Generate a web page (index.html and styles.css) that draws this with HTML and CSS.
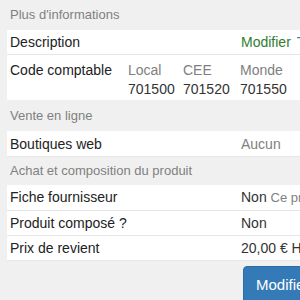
FILE: index.html
```html
<!DOCTYPE html>
<html>
<head>
	<title>Fiche produit</title>
	<meta charset="utf-8">
	<link rel="stylesheet" href="styles.css">
</head>
<body>
	<div class="page">
		<div class="head">Plus d'informations</div>
		<div class="row">
			<div class="label">Description</div>
			<div class="value"><a class="edit">Modifier</a> <a class="link">Traduire</a></div>
		</div>
		<div class="row row-codes">
			<div class="label">Code comptable</div>
			<div class="codes">
				<span class="muted">Local</span><span class="muted">CEE</span><span class="muted">Monde</span>
				<span>701500</span><span>701520</span><span>701550</span>
			</div>
		</div>

		<div class="head head-mid">Vente en ligne</div>
		<div class="row row-tall">
			<div class="label">Boutiques web</div>
			<div class="value muted">Aucun</div>
		</div>

		<div class="head head-low">Achat et composition du produit</div>
		<div class="row">
			<div class="label">Fiche fournisseur</div>
			<div class="value">Non <small class="muted">Ce produit n'a pas de fiche fournisseur</small></div>
		</div>
		<div class="row">
			<div class="label">Produit composé ?</div>
			<div class="value">Non</div>
		</div>
		<div class="row">
			<div class="label">Prix de revient</div>
			<div class="value">20,00 € HT</div>
		</div>

		<div class="footer">
			<button class="btn">Modifier</button>
		</div>
	</div>
</body>
</html>
```

FILE: styles.css
```css
html, body{
	margin: 0;
	padding: 0;
	overflow: hidden;
	background: #f0f0f0;
}
body{
	font-family: "Liberation Sans", Arial, sans-serif;
	font-size: 14px;
	color: #333;
}
.page{
	width: 460px;
}
.head{
	padding: 6px 0 6px 10px;
	line-height: 18px;
	font-size: 13px;
	color: #808080;
}
.head-mid{
	padding-top: 7px;
}
.head-low{
	padding-top: 5px;
	padding-bottom: 5px;
}
.row{
	margin-left: 7px;
	display: grid;
	grid-template-columns: 234px 1fr;
	background: #fff;
	border-bottom: 1px solid #e6e6e6;
	padding: 4px 0;
	line-height: 16px;
	white-space: nowrap;
}
.row-tall{
	padding-top: 5px;
}
.row:last-of-type{
	border-bottom: 0;
}
.label{
	padding-left: 3px;
	color: #222;
}
.row-codes{
	grid-template-columns: 121px 1fr;
	line-height: 18px;
	padding-top: 6px;
	padding-bottom: 2px;
	border-bottom: 0;
}
.codes{
	display: grid;
	grid-template-columns: 55px 57px auto;
	row-gap: 1px;
}
.muted{
	color: #808080;
}
small{
	font-size: 13px;
}
.edit{
	color: #2f7d2f;
}
.link{
	color: #337ab7;
	margin-left: 2px;
}
.footer{
	padding: 5px 0 0 243px;
}
.btn{
	font-family: "Liberation Sans", Arial, sans-serif;
	font-size: 15px;
	color: #fff;
	background: #337ab7;
	border: 1px solid #2e6da4;
	border-radius: 4px;
	padding: 8px 12px;
	line-height: 20px;
}
```
